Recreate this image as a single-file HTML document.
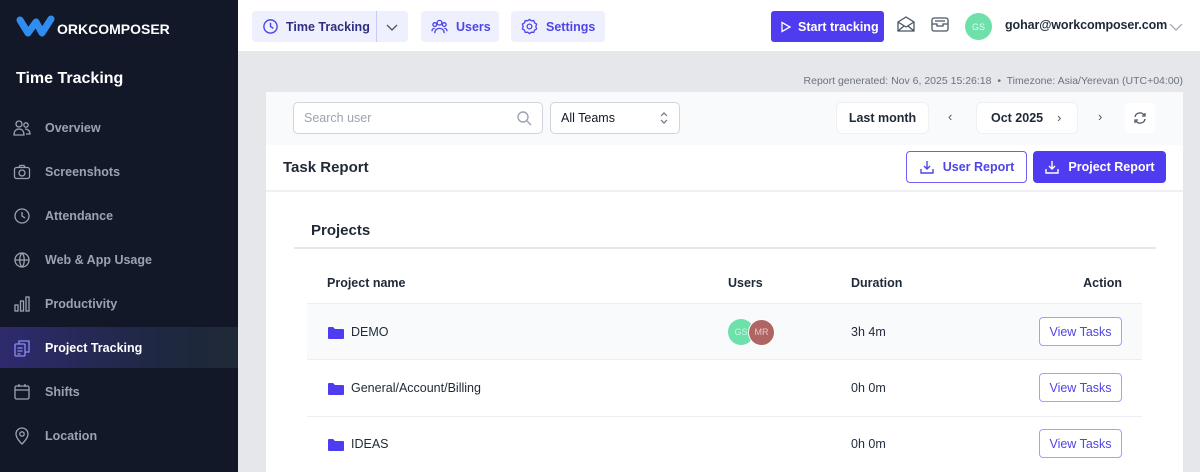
<!DOCTYPE html>
<html style="overflow:hidden;height:472px"><head><meta charset="utf-8"><style>
*{box-sizing:border-box;margin:0;padding:0}
body{width:1200px;height:472px;overflow:hidden;font-family:"Liberation Sans",sans-serif;background:#e5e7eb;position:relative}
.side{position:absolute;left:0;top:0;width:238px;height:472px;background:#121827}
.logo{position:absolute;left:16px;top:14px;display:flex;align-items:center}
.logo span{color:#fff;font-weight:bold;font-size:14px;letter-spacing:0;margin-left:1px;margin-top:6px}
.sh{position:absolute;left:16px;top:70px;color:#fff;font-size:16px;font-weight:bold}
.nav{position:absolute;left:0;width:238px;height:41px;display:flex;align-items:center;color:#9ca3af;font-size:12.5px;font-weight:bold}
.nav svg{position:absolute;left:13px}
.nav b{position:absolute;left:45px}
.nav.act{background:linear-gradient(90deg,#2e2a6e,#1e2840 70%,#1f2937);color:#fff}
.top{position:absolute;left:238px;top:0;right:0;height:52px;background:#fff;border-bottom:1px solid #e5e7eb}
.pill{position:absolute;top:11px;height:31px;background:#eef0fd;border-radius:4px;color:#4f46e5;font-size:12.5px;font-weight:bold;display:flex;align-items:center}
.card{position:absolute;left:266px;top:92px;width:917px;height:380px;background:#fff;overflow:hidden}
.fbar{position:absolute;left:0;top:0;right:0;height:53px;background:#f9fafb}
.inp{position:absolute;background:#fff;border:1px solid #d1d5db;border-radius:5px;font-size:12.5px;display:flex;align-items:center}
.btn{position:absolute;background:#fff;border-radius:5px;font-size:12.5px;font-weight:bold;color:#1f2937;display:flex;align-items:center;justify-content:center;box-shadow:0 0 0 1px #eef0f3}
.row{position:absolute;left:41px;width:835px;font-size:12.5px;color:#1f2937}
.vt{position:absolute;right:20px;width:83px;height:29px;border:1px solid #a5a0f5;border-radius:4px;color:#4f46e5;font-size:12.5px;display:flex;align-items:center;justify-content:center;background:#fff}
.fold{position:absolute;left:21px}
.nm{position:absolute;left:44px}
.dur{position:absolute;left:544px}
</style></head><body>
<div class="side">
 <div class="logo"><svg width="40" height="24" viewBox="0 0 40 24"><path d="M4 6 L12 19 L20 8 L26 19 L35 5" fill="none" stroke="#2f8cf0" stroke-width="7" stroke-linecap="round" stroke-linejoin="round"/></svg><span>ORKCOMPOSER</span></div>
 <div class="sh">Time Tracking</div>
 <div class="nav" style="top:107px"><svg width="18" height="18" viewBox="0 0 18 18" fill="none" stroke="#9ca3af" stroke-width="1.3"><circle cx="6" cy="5" r="3"/><circle cx="13" cy="6" r="2.2"/><path d="M1 16c0-4 2-6 5-6s5 2 5 6zM12 10c3 0 5 2 5 5h-4"/></svg><b>Overview</b></div>
 <div class="nav" style="top:151px"><svg width="18" height="18" viewBox="0 0 18 18" fill="none" stroke="#9ca3af" stroke-width="1.3"><rect x="1.5" y="4.5" width="15" height="11" rx="2"/><circle cx="9" cy="10" r="3"/><path d="M6 4.5l1-2h4l1 2"/></svg><b>Screenshots</b></div>
 <div class="nav" style="top:195px"><svg width="18" height="18" viewBox="0 0 18 18" fill="none" stroke="#9ca3af" stroke-width="1.3"><circle cx="9" cy="9" r="7"/><path d="M9 5v4l3 2"/></svg><b>Attendance</b></div>
 <div class="nav" style="top:239px"><svg width="18" height="18" viewBox="0 0 18 18" fill="none" stroke="#9ca3af" stroke-width="1.3"><circle cx="9" cy="9" r="7"/><path d="M2 9h14M9 2c3 3 3 11 0 14M9 2c-3 3-3 11 0 14"/></svg><b>Web &amp; App Usage</b></div>
 <div class="nav" style="top:283px"><svg width="18" height="18" viewBox="0 0 18 18" fill="none" stroke="#9ca3af" stroke-width="1.3"><rect x="2" y="10" width="3" height="6"/><rect x="7.5" y="6" width="3" height="10"/><rect x="13" y="2" width="3" height="14"/></svg><b>Productivity</b></div>
 <div class="nav act" style="top:327px"><svg width="18" height="18" viewBox="0 0 18 18" fill="none" stroke="#8b8cf5" stroke-width="1.3"><rect x="2" y="5" width="10" height="12" rx="1"/><path d="M6 5V2h10v11h-4M4.5 9h5M4.5 12h5M4.5 15h3"/></svg><b>Project Tracking</b></div>
 <div class="nav" style="top:371px"><svg width="18" height="18" viewBox="0 0 18 18" fill="none" stroke="#9ca3af" stroke-width="1.3"><rect x="2" y="3" width="14" height="13" rx="1.5"/><path d="M2 7h14M6 1v3M12 1v3"/></svg><b>Shifts</b></div>
 <div class="nav" style="top:415px"><svg width="18" height="18" viewBox="0 0 18 18" fill="none" stroke="#9ca3af" stroke-width="1.3"><path d="M9 17s-6-5.5-6-10a6 6 0 0 1 12 0c0 4.5-6 10-6 10z"/><circle cx="9" cy="7" r="2.2"/></svg><b>Location</b></div>
</div>
<div class="top">
 <div class="pill" style="left:14px;width:156px"><svg style="margin-left:10px" width="17" height="17" viewBox="0 0 18 18" fill="none" stroke="#4f46e5" stroke-width="1.5"><circle cx="9" cy="9" r="7"/><path d="M9 5v4l3 2"/></svg><span style="margin-left:7px;color:#312e81">Time Tracking</span><span style="position:absolute;left:124px;top:0;height:31px;border-left:1px solid #c7c9f5"></span><svg style="position:absolute;left:133px" width="14" height="14" viewBox="0 0 14 14" fill="none" stroke="#4b5563" stroke-width="1.3"><path d="M2 5l5 5 5-5"/></svg></div>
 <div class="pill" style="left:183px;width:78px"><svg style="margin-left:10px" width="17" height="17" viewBox="0 0 18 18" fill="none" stroke="#4f46e5" stroke-width="1.4"><circle cx="9" cy="5" r="2.5"/><circle cx="4" cy="7" r="2"/><circle cx="14" cy="7" r="2"/><path d="M4 16c0-3 2-5 5-5s5 2 5 5M1 14c0-2 1-3 3-3M17 14c0-2-1-3-3-3"/></svg><span style="margin-left:8px">Users</span></div>
 <div class="pill" style="left:273px;width:94px"><svg style="margin-left:10px" width="17" height="17" viewBox="0 0 18 18" fill="none" stroke="#4f46e5" stroke-width="1.4"><circle cx="9" cy="9" r="2.5"/><path d="M9 1.5l2 1.5 2.5-.3.8 2.4 2.2 1.3-.8 2.6.8 2.6-2.2 1.3-.8 2.4-2.5-.3-2 1.5-2-1.5-2.5.3-.8-2.4L1.5 11.6l.8-2.6-.8-2.6 2.2-1.3.8-2.4 2.5.3z"/></svg><span style="margin-left:8px">Settings</span></div>
 <div style="position:absolute;left:533px;top:11px;width:113px;height:31px;background:#4f3cf0;border-radius:3px;color:#fff;font-size:12.5px;font-weight:bold;display:flex;align-items:center"><svg style="margin-left:9px" width="12" height="12" viewBox="0 0 12 12" fill="none" stroke="#fff" stroke-width="1.3"><path d="M2 1.5l8 4.5-8 4.5z"/></svg><span style="margin-left:6px">Start tracking</span></div>
 <svg style="position:absolute;left:658px;top:14px" width="20" height="20" viewBox="0 0 20 20" fill="none" stroke="#4b5563" stroke-width="1.3"><path d="M2 8l8-5 8 5v9H2zM2 8l8 5 8-5M2 17l6-5M18 17l-6-5"/></svg>
 <svg style="position:absolute;left:692px;top:14px" width="20" height="20" viewBox="0 0 20 20" fill="none" stroke="#4b5563" stroke-width="1.3"><rect x="2" y="4" width="16" height="13" rx="2"/><path d="M2 10h5v2h6v-2h5M5 7h10"/></svg>
 <div style="position:absolute;left:727px;top:13px;width:27px;height:27px;border-radius:50%;background:#6ee0a9;color:#e6fff1;font-size:9px;display:flex;align-items:center;justify-content:center">GS</div>
 <div style="position:absolute;left:767px;top:18px;font-size:12.5px;font-weight:bold;color:#1f2937;letter-spacing:-0.1px">gohar@workcomposer.com</div>
 <svg style="position:absolute;left:931px;top:20px" width="14" height="14" viewBox="0 0 14 14" fill="none" stroke="#9ca3af" stroke-width="1.2"><path d="M1 4l6 6 6-6"/></svg>
</div>
<div style="position:absolute;right:17px;top:75px;font-size:10.5px;color:#6b7280">Report generated: Nov 6, 2025 15:26:18 &nbsp;•&nbsp; Timezone: Asia/Yerevan (UTC+04:00)</div>
<div class="card">
 <div class="fbar"></div>
 <div class="inp" style="left:27px;top:10px;width:250px;height:32px;color:#9ca3af;padding-left:10px">Search user<svg style="position:absolute;right:10px" width="16" height="16" viewBox="0 0 16 16" fill="none" stroke="#9ca3af" stroke-width="1.4"><circle cx="7" cy="7" r="5"/><path d="M11 11l4 4"/></svg></div>
 <div class="inp" style="left:284px;top:10px;width:130px;height:32px;color:#111827;padding-left:10px">All Teams<svg style="position:absolute;right:10px" width="10" height="14" viewBox="0 0 10 14" fill="none" stroke="#6b7280" stroke-width="1.2"><path d="M2 5l3-3 3 3M2 9l3 3 3-3"/></svg></div>
 <div class="btn" style="left:571px;top:11px;width:91px;height:30px">Last month</div>
 <div style="position:absolute;left:682px;top:17px;font-size:13px;color:#4b5563">‹</div>
 <div class="btn" style="left:711px;top:11px;width:100px;height:30px;justify-content:flex-start;padding-left:14px">Oct 2025<span style="margin-left:14px;font-weight:normal;color:#4b5563">›</span></div>
 <div style="position:absolute;left:832px;top:17px;font-size:13px;color:#4b5563">›</div>
 <div class="btn" style="left:859px;top:11px;width:30px;height:30px;box-shadow:none"><svg width="14" height="14" viewBox="0 0 14 14" fill="none" stroke="#4b5563" stroke-width="1.3"><path d="M2 6a5 5 0 0 1 9-2M12 2v3H9M12 8a5 5 0 0 1-9 2M2 12V9h3"/></svg></div>
 <div style="position:absolute;left:17px;top:67px;font-size:15px;font-weight:bold;color:#1f2937">Task Report</div>
 <div style="position:absolute;left:640px;top:59px;width:121px;height:32px;border:1px solid #6d5ef5;border-radius:4px;color:#4f46e5;font-size:12.5px;font-weight:bold;display:flex;align-items:center;justify-content:center"><svg width="16" height="16" viewBox="0 0 16 16" fill="none" stroke="#4f46e5" stroke-width="1.4"><path d="M8 2v8M5 7l3 3 3-3M2 10v4h12v-4"/></svg><span style="margin-left:8px">User Report</span></div>
 <div style="position:absolute;left:767px;top:59px;width:133px;height:32px;background:#4f3cf0;border-radius:4px;color:#fff;font-size:12.5px;font-weight:bold;display:flex;align-items:center;justify-content:center"><svg width="16" height="16" viewBox="0 0 16 16" fill="none" stroke="#fff" stroke-width="1.4"><path d="M8 2v8M5 7l3 3 3-3M2 10v4h12v-4"/></svg><span style="margin-left:8px">Project Report</span></div>
 <div style="position:absolute;left:0;right:0;top:98px;border-top:2px solid #eef0f3"></div>
 <div style="position:absolute;left:45px;top:130px;font-size:15px;font-weight:bold;color:#1f2937">Projects</div>
 <div style="position:absolute;left:28px;width:862px;top:155px;border-top:2px solid #e5e7eb"></div>
 <div class="row" style="top:170px;height:41px;font-weight:bold"><span style="position:absolute;left:20px;top:14px">Project name</span><span style="position:absolute;left:421px;top:14px">Users</span><span style="position:absolute;left:544px;top:14px">Duration</span><span style="position:absolute;right:20px;top:14px">Action</span></div>
 <div class="row" style="top:211px;height:57px;background:#f9fafb;border-top:1px solid #eceef1;border-bottom:1px solid #eceef1"><svg class="fold" style="top:22px" width="16" height="13" viewBox="0 0 16 13"><path d="M0 2a1 1 0 0 1 1-1h4l2 2h8a1 1 0 0 1 1 1v8a1 1 0 0 1-1 1H1a1 1 0 0 1-1-1z" fill="#4f3cf0"/></svg><span class="nm" style="top:21px">DEMO</span><span style="position:absolute;left:421px;top:15px;width:26px;height:26px;border-radius:50%;background:#6ee0a9;color:#c9f5df;font-size:9px;line-height:26px;text-align:center">GS</span><span style="position:absolute;left:441px;top:15px;width:27px;height:27px;border-radius:50%;background:#b06565;border:1px solid #fff;color:#e9c4c4;font-size:9px;line-height:25px;text-align:center">MR</span><span class="dur" style="top:21px">3h 4m</span><div class="vt" style="top:13px">View Tasks</div></div>
 <div class="row" style="top:268px;height:57px;border-bottom:1px solid #eceef1"><svg class="fold" style="top:22px" width="16" height="13" viewBox="0 0 16 13"><path d="M0 2a1 1 0 0 1 1-1h4l2 2h8a1 1 0 0 1 1 1v8a1 1 0 0 1-1 1H1a1 1 0 0 1-1-1z" fill="#4f3cf0"/></svg><span class="nm" style="top:21px">General/Account/Billing</span><span class="dur" style="top:21px">0h 0m</span><div class="vt" style="top:13px">View Tasks</div></div>
 <div class="row" style="top:325px;height:57px"><svg class="fold" style="top:21px" width="16" height="13" viewBox="0 0 16 13"><path d="M0 2a1 1 0 0 1 1-1h4l2 2h8a1 1 0 0 1 1 1v8a1 1 0 0 1-1 1H1a1 1 0 0 1-1-1z" fill="#4f3cf0"/></svg><span class="nm" style="top:20px">IDEAS</span><span class="dur" style="top:20px">0h 0m</span><div class="vt" style="top:12px">View Tasks</div></div>
</div>
</body></html>
